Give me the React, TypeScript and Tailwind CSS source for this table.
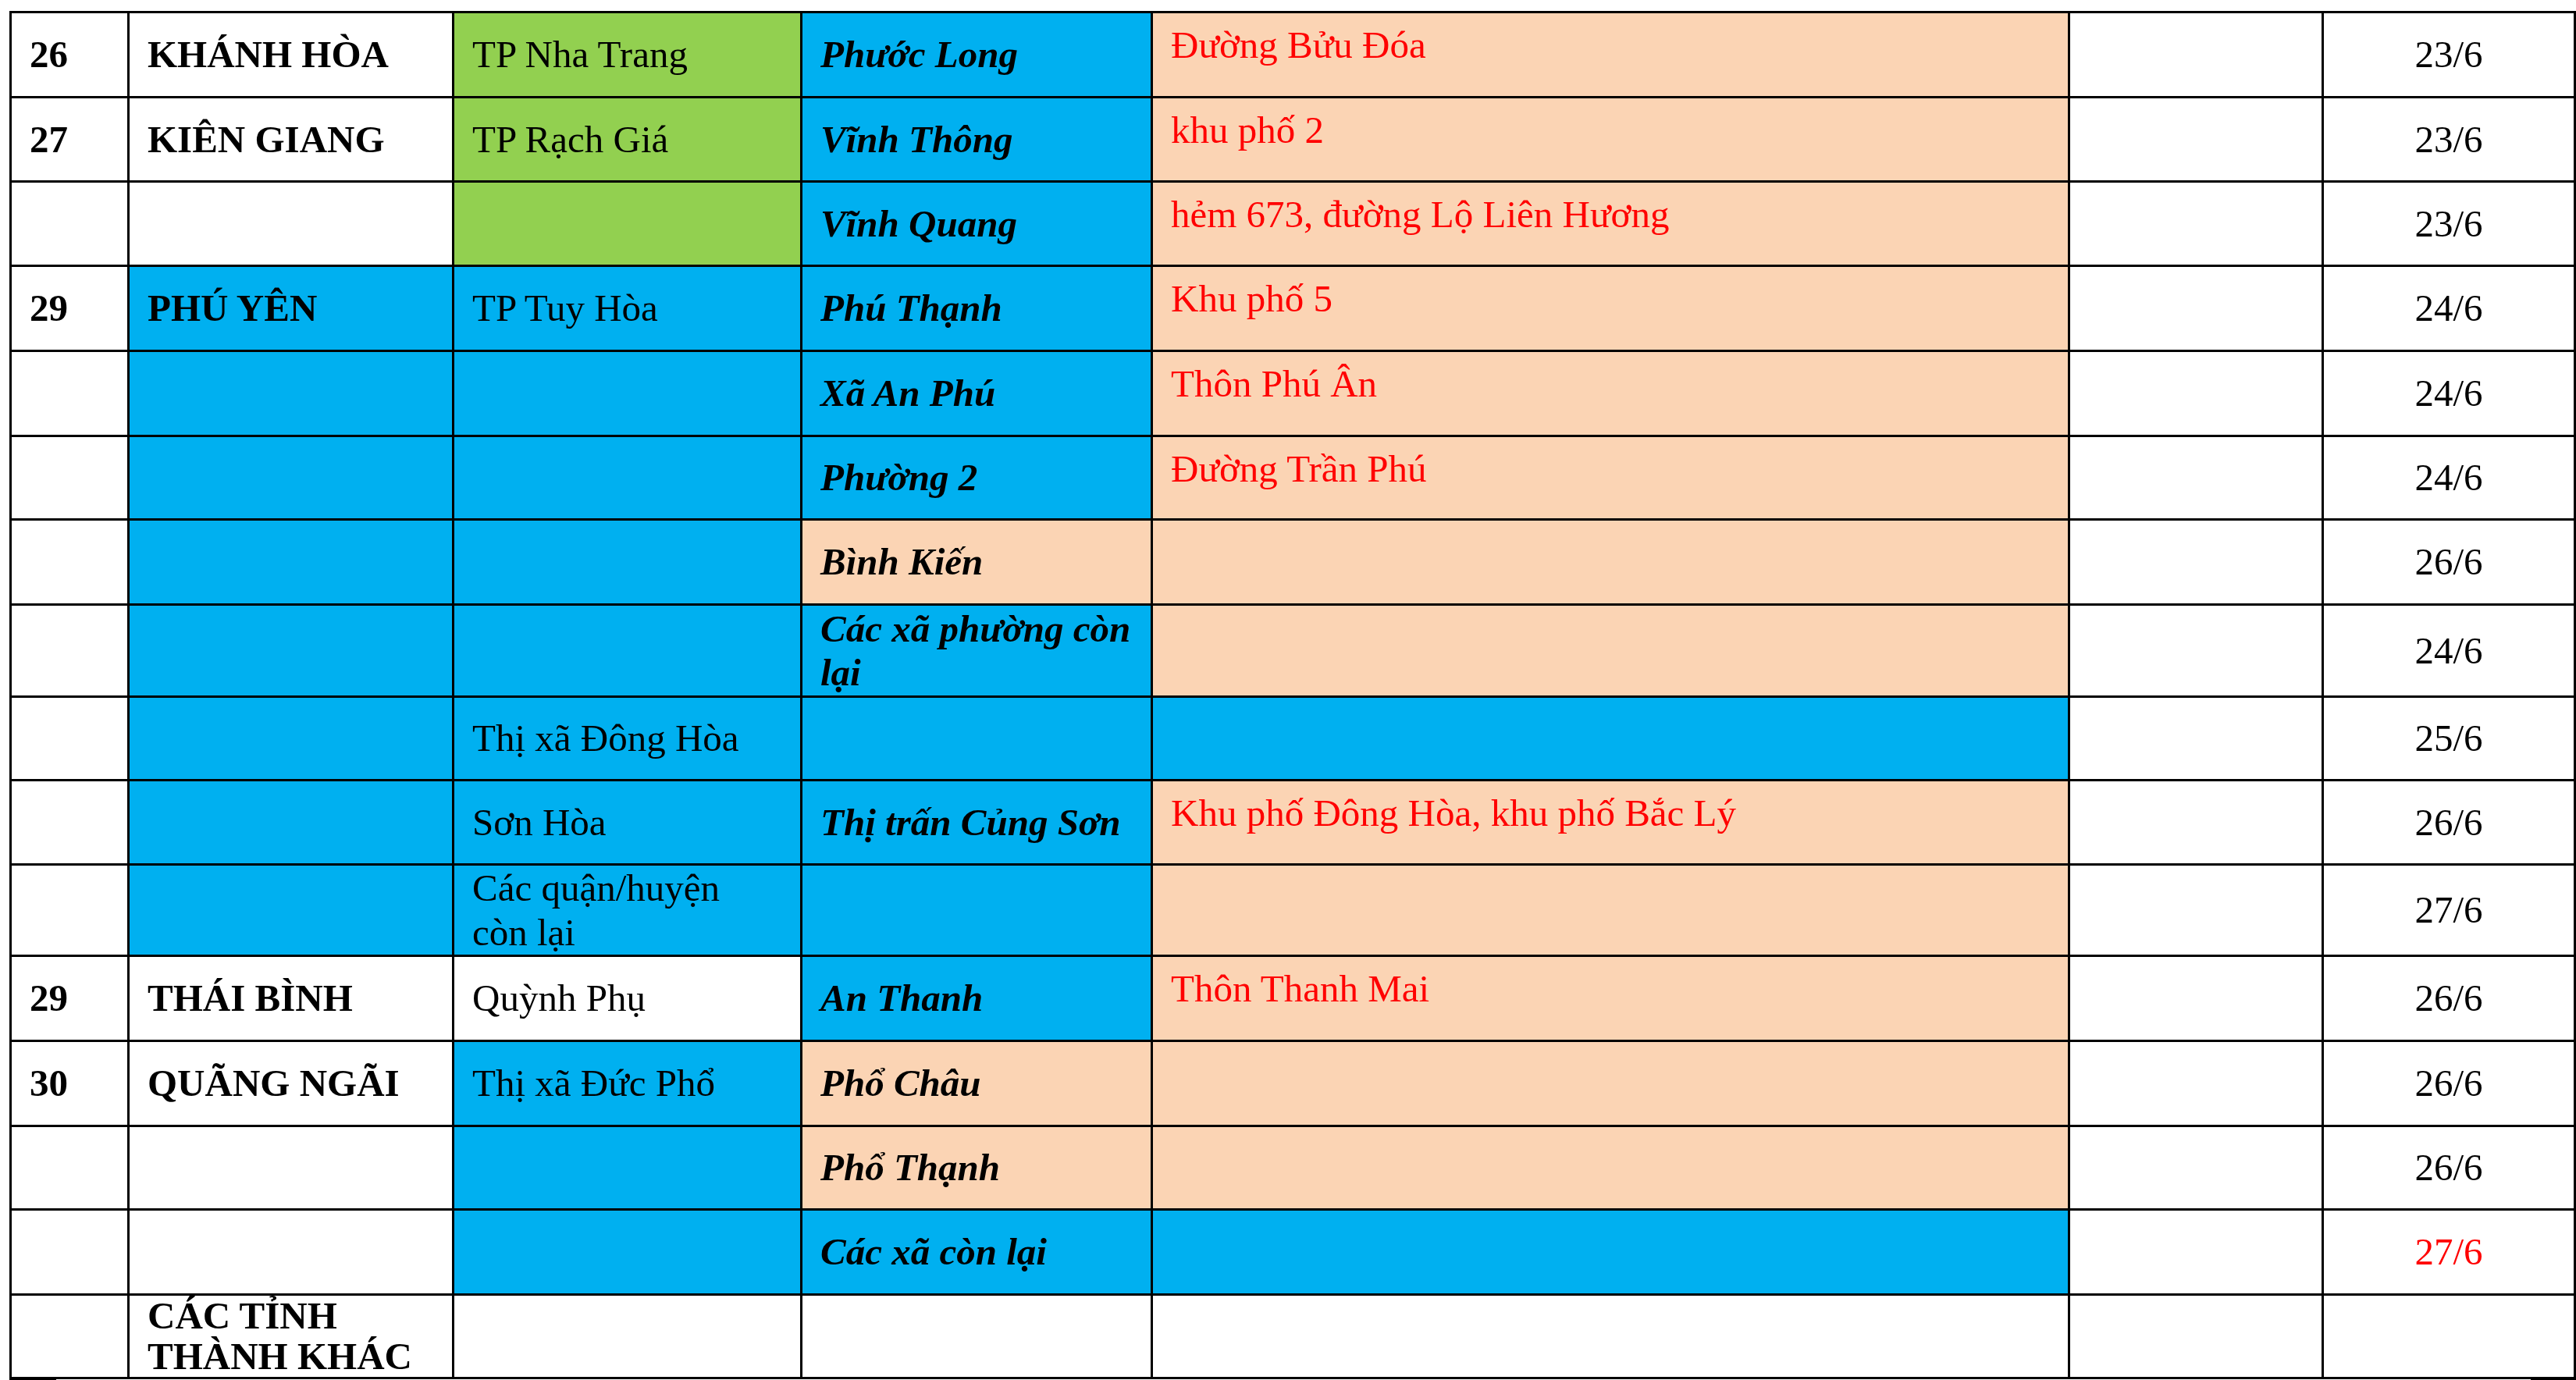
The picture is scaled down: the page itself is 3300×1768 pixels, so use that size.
import React from "react";

// cell background colours used in the sheet
const BG: Record<string, string> = {
  w: "bg-white",
  g: "bg-[#92d050]",
  b: "bg-[#00b0f0]",
  p: "bg-[#fbd4b4]",
};

// per-column text style
const COL: string[] = [
  "font-bold items-center",
  "font-bold items-center",
  "items-center",
  "font-bold italic items-center",
  "text-[#ff0000] items-start pt-[13px]",
  "items-center",
  "items-center justify-center",
];

type Cell = [string, string, string?];

const rows: Cell[][] = [
  [["26", "w"], ["KHÁNH HÒA", "w"], ["TP Nha Trang", "g"], ["Phước Long", "b"], ["Đường Bửu Đóa", "p"], ["", "w"], ["23/6", "w"]],
  [["27", "w"], ["KIÊN GIANG", "w"], ["TP Rạch Giá", "g"], ["Vĩnh Thông", "b"], ["khu phố 2", "p"], ["", "w"], ["23/6", "w"]],
  [["", "w"], ["", "w"], ["", "g"], ["Vĩnh Quang", "b"], ["hẻm 673, đường Lộ Liên Hương", "p"], ["", "w"], ["23/6", "w"]],
  [["29", "w"], ["PHÚ YÊN", "b"], ["TP Tuy Hòa", "b"], ["Phú Thạnh", "b"], ["Khu phố 5", "p"], ["", "w"], ["24/6", "w"]],
  [["", "w"], ["", "b"], ["", "b"], ["Xã An Phú", "b"], ["Thôn Phú Ân", "p"], ["", "w"], ["24/6", "w"]],
  [["", "w"], ["", "b"], ["", "b"], ["Phường 2", "b"], ["Đường Trần Phú", "p"], ["", "w"], ["24/6", "w"]],
  [["", "w"], ["", "b"], ["", "b"], ["Bình Kiến", "p"], ["", "p"], ["", "w"], ["26/6", "w"]],
  [["", "w"], ["", "b"], ["", "b"], ["Các xã phường còn\nlại", "b"], ["", "p"], ["", "w"], ["24/6", "w"]],
  [["", "w"], ["", "b"], ["Thị xã Đông Hòa", "b"], ["", "b"], ["", "b"], ["", "w"], ["25/6", "w"]],
  [["", "w"], ["", "b"], ["Sơn Hòa", "b"], ["Thị trấn Củng Sơn", "b"], ["Khu phố Đông Hòa, khu phố Bắc Lý", "p"], ["", "w"], ["26/6", "w"]],
  [["", "w"], ["", "b"], ["Các quận/huyện\ncòn lại", "b", "leading-[57px]"], ["", "b"], ["", "p"], ["", "w"], ["27/6", "w"]],
  [["29", "w"], ["THÁI BÌNH", "w"], ["Quỳnh Phụ", "w"], ["An Thanh", "b"], ["Thôn Thanh Mai", "p"], ["", "w"], ["26/6", "w"]],
  [["30", "w"], ["QUÃNG NGÃI", "w"], ["Thị xã Đức Phổ", "b"], ["Phổ Châu", "p"], ["", "p"], ["", "w"], ["26/6", "w"]],
  [["", "w"], ["", "w"], ["", "b"], ["Phổ Thạnh", "p"], ["", "p"], ["", "w"], ["26/6", "w"]],
  [["", "w"], ["", "w"], ["", "b"], ["Các xã còn lại", "b"], ["", "b"], ["", "w"], ["27/6", "w", "text-[#ff0000]"]],
  [["", "w"], ["CÁC TỈNH\nTHÀNH KHÁC", "w", "leading-[52px]"], ["", "w"], ["", "w"], ["", "w"], ["", "w"], ["", "w"]],
];

export default function App() {
  return (
    <main className="w-[3300px] h-[1768px] overflow-hidden bg-white pt-[14px] font-['Liberation_Serif','Times_New_Roman',serif] text-[49px] leading-[56px] text-black">
      <div className="ml-[12px] grid w-fit grid-cols-[148px_413px_443px_446px_1172px_322px_320px] grid-rows-[106px_105px_105px_106px_106px_104px_106px_115px_104px_105px_114px_106px_106px_104px_106px_104px] gap-[3px] border-[3px] border-black bg-black">
        {rows.map((row, r) =>
          row.map(([text, bg, extra], c) => (
            <div
              key={`${r}-${c}`}
              className={`flex whitespace-pre-line px-[23px] ${BG[bg]} ${COL[c]} ${extra ?? ""}`}
            >
              {text && <span>{text}</span>}
            </div>
          ))
        )}
      </div>
      {/* start of next page's borders */}
      <div className="flex h-[1px] justify-between">
        <div className="ml-[12px] w-[60px] bg-black" />
        <div className="w-[58px] bg-black" />
      </div>
    </main>
  );
}
